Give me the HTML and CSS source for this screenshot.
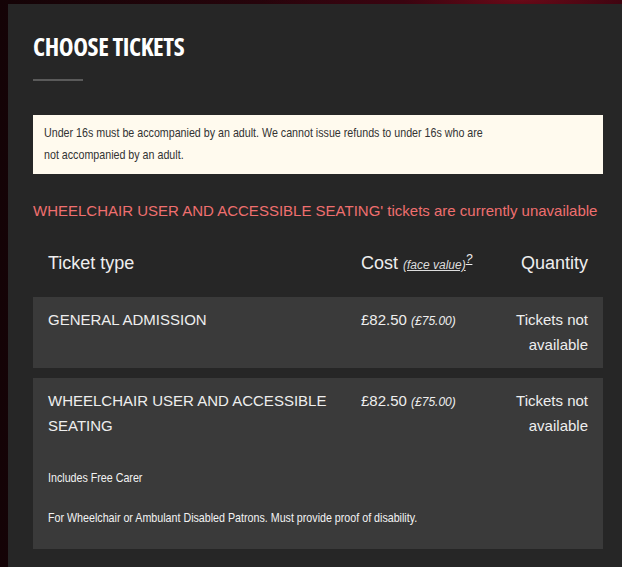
FILE: index.html
```html
<!DOCTYPE html>
<html>
<head>
  <meta charset="utf-8">
  <meta name="viewport" content="width=device-width">
  <title>Choose tickets</title>
  <link rel="stylesheet" href="styles.css">
</head>
<body>
  <div class="panel">
    <h2 class="title">CHOOSE TICKETS</h2>
    <div class="rule"></div>

    <div class="notice">
      <p class="narrow">Under 16s must be accompanied by an adult. We cannot issue refunds to under 16s who are not accompanied by an adult.</p>
    </div>

    <p class="warn">WHEELCHAIR USER AND ACCESSIBLE SEATING' tickets are currently unavailable</p>

    <div class="tickets">
      <div class="row head">
        <div class="name">Ticket type</div>
        <div class="cost">Cost <a href="#" class="face">(face value)</a><sup>?</sup></div>
        <div class="qty">Quantity</div>
      </div>

      <div class="row item">
        <div class="name">GENERAL ADMISSION</div>
        <div class="cost">&pound;82.50 <span class="fv">(&pound;75.00)</span></div>
        <div class="qty">Tickets not available</div>
      </div>

      <div class="row item">
        <div class="name">WHEELCHAIR USER AND ACCESSIBLE SEATING</div>
        <div class="cost">&pound;82.50 <span class="fv">(&pound;75.00)</span></div>
        <div class="qty">Tickets not available</div>
        <div class="info">
          <p class="narrow">Includes Free Carer</p>
          <p class="narrow">For Wheelchair or Ambulant Disabled Patrons. Must provide proof of disability.</p>
        </div>
      </div>
    </div>
  </div>
</body>
</html>
```

FILE: styles.css
```css
*{
  padding: 0;
  margin: 0;
  box-sizing: border-box;
}
html, body{
  height: 100%;
}
body{
  font-family: "Liberation Sans", Arial, sans-serif;
  color: #eee;
  background: #0a0204;
  background-image: radial-gradient(ellipse 260px 40px at 520px 0, #6a0a18 0%, #3a0410 45%, rgba(10,2,4,0) 100%),
                    linear-gradient(90deg, #140306 0%, #2a040c 50%, #3a0410 100%);
  padding: 4px 0 0 8px;
  overflow: hidden;
}
.panel{
  background: #262626;
  min-height: 100%;
  padding: 28px 19px 20px 25px;
}
.title{
  font-family: "Open Sans", "Liberation Sans", sans-serif;
  font-stretch: 75%;
  font-weight: bold;
  font-size: 25px;
  line-height: 28px;
  letter-spacing: -0.4px;
  color: #fff;
}
.rule{
  width: 50px;
  height: 2px;
  background: #5a5a5a;
  margin-top: 19px;
}
/* small print is set in a narrow face: squeeze the regular one */
.narrow{
  transform: scaleX(0.822);
  transform-origin: left top;
}
.notice{
  margin-top: 34px;
  background: #fffaee;
  color: #333;
  font-size: 13px;
  line-height: 22px;
  padding: 7px 11px 8px;
}
.warn{
  margin-top: 26px;
  color: #ef6f6f;
  font-size: 15px;
  line-height: 22px;
}
.tickets{
  margin-top: 28px;
}
.row{
  display: grid;
  grid-template-columns: 313px 1fr 110px;
  padding: 0 15px;
}
.head{
  font-size: 18px;
  line-height: 26px;
  padding-bottom: 19px;
  color: #eee;
}
.face{
  color: #ddd;
  font-size: 12px;
  font-style: italic;
}
.head sup{
  font-size: 12px;
  font-style: italic;
  text-decoration: underline;
  vertical-align: 6px;
  line-height: 0;
}
.item{
  background: #3a3a3a;
  font-size: 15px;
  line-height: 25px;
  padding-top: 10px;
  padding-bottom: 11px;
  margin-bottom: 10px;
}
.fv{
  font-size: 12px;
  font-style: italic;
}
.qty{
  text-align: right;
}
.info{
  grid-column: 1 / 4;
  font-size: 13px;
  color: #f2f2f2;
  padding-top: 30px;
  padding-bottom: 10px;
}
.info p{
  line-height: 20px;
  margin-bottom: 20px;
}
.info p:last-child{
  margin-bottom: 0;
}
.row.item .name{
  padding-right: 10px;
}
```
